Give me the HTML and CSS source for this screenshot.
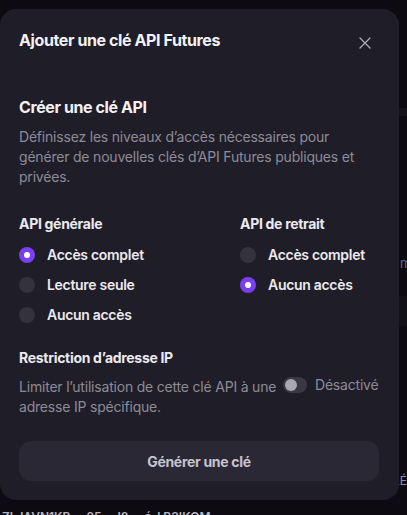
FILE: index.html
```html
<!DOCTYPE html>
<html lang="fr">
<head>
<meta charset="UTF-8">
<meta name="viewport" content="width=device-width, initial-scale=1.0">
<title>Ajouter une clé API Futures</title>
<link rel="stylesheet" href="styles.css">
</head>
<body>
  <!-- page behind the dialog -->
  <div class="page">
    <div class="page-band"></div>
    <div class="page-cell">m</div>
    <div class="page-box"></div>
    <div class="page-tail">LÉ</div>
    <div class="page-row">
      <span>ZLJAVN1KB</span><span>25</span><span>I8</span><span>é-l B3IKOM</span>
    </div>
  </div>

  <div class="modal">
    <div class="modal-head">
      <h1>Ajouter une clé API Futures</h1>
      <button class="close" aria-label="Fermer">
        <svg width="12" height="12" viewBox="0 0 12 12">
          <path d="M1 1 L11 11 M11 1 L1 11" stroke="currentColor" stroke-width="1.3" stroke-linecap="round"/>
        </svg>
      </button>
    </div>

    <h2>Créer une clé API</h2>
    <p class="desc">Définissez les niveaux d’accès nécessaires pour générer de nouvelles clés d’API Futures publiques et privées.</p>

    <div class="perms">
      <div class="group">
        <div class="label">API générale</div>
        <div class="opt"><span class="radio on"></span>Accès complet</div>
        <div class="opt"><span class="radio"></span>Lecture seule</div>
        <div class="opt"><span class="radio"></span>Aucun accès</div>
      </div>
      <div class="group">
        <div class="label">API de retrait</div>
        <div class="opt"><span class="radio"></span>Accès complet</div>
        <div class="opt"><span class="radio on"></span>Aucun accès</div>
      </div>
    </div>

    <div class="label ip-label">Restriction d’adresse IP</div>
    <div class="ip-row">
      <p class="desc ip-desc">Limiter l’utilisation de cette clé API à une adresse IP spécifique.</p>
      <div class="switch"><span class="track"><span class="knob"></span></span>Désactivé</div>
    </div>

    <button class="submit">Générer une clé</button>
  </div>
</body>
</html>
```

FILE: styles.css
```css
body {
  margin: 0;
  background: #0d0b11;
  font-family: Inter, "Noto Sans", sans-serif;
  width: 407px;
  height: 515px;
  overflow: hidden;
  position: relative;
}

.page {
  padding-top: 108px;
}

.page-band {
  height: 8px;
  margin-left: 399px;
  background: #151319;
}

.page-cell {
  margin: 138px 0 0 400px;
  font-size: 13px;
  color: #5d6a86;
  line-height: 18px;
}

.page-box {
  height: 30px;
  margin: 24px 0 0 399px;
  background: #131118;
}

.page-tail {
  margin: 147px 0 0 393px;
  font-size: 12px;
  color: #8a8fa6;
  line-height: 16px;
}

.page-row {
  display: flex;
  gap: 16px;
  margin: 20px 0 0 2px;
  font-size: 12px;
  font-weight: 600;
  color: #b8b6c2;
  line-height: 16px;
}

/* dialog */
.modal {
  position: absolute;
  top: 9px;
  left: 0;
  width: 360px;
  height: 453px;
  padding: 19px 20px 19px 19px;
  background: #1f1d27;
  border-radius: 16px;
}

.modal-head {
  display: flex;
  align-items: center;
  justify-content: space-between;
}

h1 {
  margin: 0;
  font-size: 16px;
  line-height: 24px;
  font-weight: 700;
  color: #f3f2f6;
  letter-spacing: -0.4px;
}

.close {
  background: none;
  border: 0;
  padding: 0;
  margin: 6px 8px 0 0;
  color: #aeacb8;
  display: flex;
}

h2 {
  margin: 43px 0 0;
  font-size: 16px;
  line-height: 24px;
  font-weight: 700;
  color: #f3f2f6;
  letter-spacing: -0.4px;
}

.desc {
  margin: 8px 0 0;
  font-size: 14px;
  line-height: 20px;
  color: #8d8b97;
  letter-spacing: -0.2px;
}

.perms {
  display: grid;
  grid-template-columns: 221px 1fr;
  margin-top: 27px;
}

.group {
  display: flex;
  flex-direction: column;
  gap: 10px;
}

.label {
  font-size: 14px;
  line-height: 20px;
  font-weight: 700;
  color: #eceaf0;
  letter-spacing: -0.3px;
}

.group .label {
  margin-bottom: 1px;
}

.opt {
  display: flex;
  align-items: center;
  gap: 12px;
  font-size: 14px;
  line-height: 20px;
  font-weight: 600;
  color: #eceaf0;
  letter-spacing: -0.3px;
}

.radio {
  width: 16px;
  height: 16px;
  border-radius: 50%;
  background: #34323e;
  display: flex;
  align-items: center;
  justify-content: center;
}

.radio.on {
  background: #7a3ff0;
}

.radio.on::after {
  content: "";
  width: 6px;
  height: 6px;
  border-radius: 50%;
  background: #fff;
}

.ip-label {
  margin-top: 23px;
}

.ip-row {
  display: flex;
  align-items: flex-start;
  gap: 0;
}

.ip-desc {
  width: 264px;
  margin-top: 9px;
}

.switch {
  display: flex;
  align-items: center;
  gap: 8px;
  margin-top: 7px;
  font-size: 14px;
  line-height: 20px;
  color: #8d8b97;
  letter-spacing: -0.2px;
}

.track {
  width: 24px;
  height: 16px;
  border-radius: 8px;
  background: #3a3844;
  display: flex;
  align-items: center;
  padding-left: 2px;
  box-sizing: border-box;
}

.knob {
  width: 12px;
  height: 12px;
  border-radius: 50%;
  background: #a9a7b3;
}

.submit {
  display: block;
  width: 360px;
  height: 40px;
  margin-top: 24px;
  border: 0;
  border-radius: 12px;
  background: #2a2834;
  color: #c6c4ce;
  font-family: Inter, "Noto Sans", sans-serif;
  font-size: 14px;
  font-weight: 700;
  letter-spacing: -0.3px;
}
```
